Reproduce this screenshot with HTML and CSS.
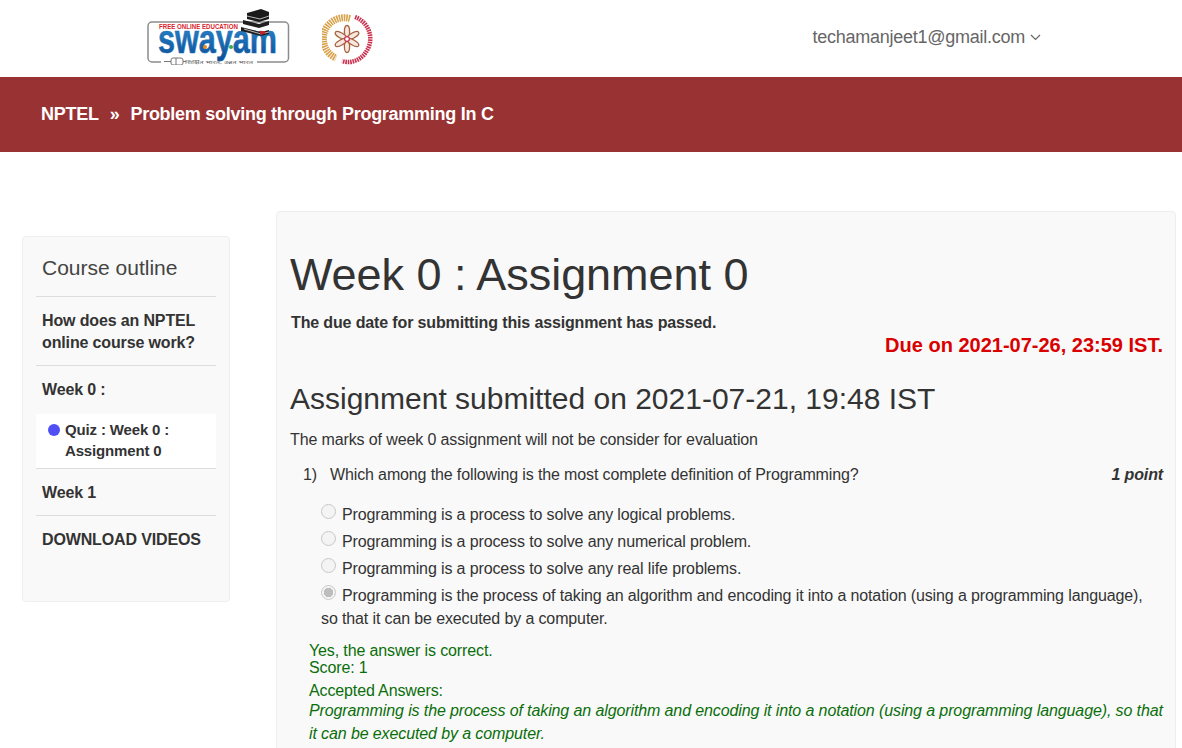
FILE: index.html
```html
<!DOCTYPE html>
<html lang="en">
<head>
<meta charset="utf-8">
<title>Week 0 : Assignment 0</title>
<link rel="stylesheet" href="styles.css">
</head>
<body>
<header class="topbar">
  <div class="logos">
    <svg class="logo-swayam" width="170" height="58" viewBox="0 0 170 58">
      <defs>
        <linearGradient id="swayamBlue" x1="0" y1="0" x2="0" y2="1">
          <stop offset="0" stop-color="#2f8fd6"/>
          <stop offset="1" stop-color="#0c4f96"/>
        </linearGradient>
      </defs>
      <rect x="1" y="15" width="140.5" height="40" rx="4" fill="#fff" stroke="#8c8c8c" stroke-width="1.5"/>
      <rect x="14" y="50" width="96" height="8" fill="#fff"/>
      <text x="12" y="21.5" class="logo-free" textLength="79" lengthAdjust="spacingAndGlyphs">FREE ONLINE EDUCATION</text>
      <text x="11" y="45.5" class="logo-word" textLength="119" lengthAdjust="spacingAndGlyphs" fill="url(#swayamBlue)">swayam</text>
      <circle cx="58" cy="40" r="2" fill="#f08a1c"/>
      <circle cx="84" cy="40" r="2" fill="#35a84a"/>
      <rect x="24" y="51" width="12" height="7" rx="2" fill="#fff" stroke="#777" stroke-width="1"/>
      <path d="M17 54.5h7M36 54.5h3M29 51v7" stroke="#777" stroke-width="1" fill="none"/>
      <text x="38" y="57" class="logo-tag" textLength="68" lengthAdjust="spacingAndGlyphs">शिक्षित भारत, उन्नत भारत</text>
      <path d="M100 6l14-4 8 3v7l-10 3-12-3z" fill="#1a1a1a"/>
      <path d="M96 13l16 4 10-3v4l-10 3-16-4zM94 20l20 5 8-2v4l-8 2-20-5z" fill="#1f1f1f"/>
      <path d="M100 9l13 3 9-3M97 22l17 5 8-2" stroke="#ddd" stroke-width=".8" fill="none"/>
      <rect x="113" y="24" width="5" height="3" fill="#c8202c"/>
    </svg>
    <svg class="logo-seal" width="52" height="52" viewBox="0 0 52 52">
      <path d="M28 4.5A21 21 0 0 0 14 44" fill="none" stroke="#d7a24a" stroke-width="7" stroke-dasharray="1.6 .8"/>
      <path d="M33 3A23 23 0 0 1 44 38C39 46 29 50 20 47" fill="none" stroke="#c9304f" stroke-width="4.5" stroke-dasharray="1.6 .8"/>
      <circle cx="25" cy="25" r="15.5" fill="#fff"/>
      <g fill="#f6e7df" stroke="#a5623f" stroke-width="1.3">
        <ellipse cx="25" cy="18" rx="2.6" ry="6.5"/>
        <ellipse cx="25" cy="32" rx="2.6" ry="6.5"/>
        <ellipse cx="19" cy="21.5" rx="2.6" ry="6.5" transform="rotate(-60 19 21.5)"/>
        <ellipse cx="31" cy="21.5" rx="2.6" ry="6.5" transform="rotate(60 31 21.5)"/>
        <ellipse cx="19" cy="28.5" rx="2.6" ry="6.5" transform="rotate(60 19 28.5)"/>
        <ellipse cx="31" cy="28.5" rx="2.6" ry="6.5" transform="rotate(-60 31 28.5)"/>
      </g>
      <circle cx="25" cy="25" r="2.4" fill="#fff" stroke="#c9304f" stroke-width="1.2"/>
    </svg>
  </div>
  <div class="account">
    <span>techamanjeet1@gmail.com</span>
    <svg class="chevron" width="11" height="7" viewBox="0 0 11 7"><path d="M1 1l4.5 4.5L10 1" fill="none" stroke="#666" stroke-width="1.2"/></svg>
  </div>
</header>

<div class="banner">
  <span>NPTEL</span><span class="sep">»</span><span>Problem solving through Programming In C</span>
</div>

<div class="page">
  <nav class="outline">
    <div class="outline-title">Course outline</div>
    <div class="outline-item first">How does an NPTEL online course work?</div>
    <div class="outline-item week">Week 0 :</div>
    <div class="outline-sub">
      <span class="dot"></span>
      <span>Quiz : Week 0 : Assignment 0</span>
    </div>
    <div class="outline-item single">Week 1</div>
    <div class="outline-item single">DOWNLOAD VIDEOS</div>
  </nav>

  <main class="content">
    <h1>Week 0 : Assignment 0</h1>
    <p class="passed">The due date for submitting this assignment has passed.</p>
    <p class="due">Due on 2021-07-26, 23:59 IST.</p>
    <h2>Assignment submitted on 2021-07-21, 19:48 IST</h2>
    <p class="note">The marks of week 0 assignment will not be consider for evaluation</p>
    <div class="question">
      <span class="qnum">1)</span>
      <span class="qtext">Which among the following is the most complete definition of Programming?</span>
      <span class="points">1 point</span>
    </div>
    <div class="options">
      <div class="option"><span class="radio"></span>Programming is a process to solve any logical problems.</div>
      <div class="option"><span class="radio"></span>Programming is a process to solve any numerical problem.</div>
      <div class="option"><span class="radio"></span>Programming is a process to solve any real life problems.</div>
      <div class="option last"><span class="radio checked"></span>Programming is the process of taking an algorithm and encoding it into a notation (using a programming language), so that it can be executed by a computer.</div>
    </div>
    <div class="feedback">
      <div class="fb-yes">Yes, the answer is correct.</div>
      <div class="fb-score">Score: 1</div>
      <div class="fb-label">Accepted Answers:</div>
      <div class="fb-answer">Programming is the process of taking an algorithm and encoding it into a notation (using a programming language), so that it can be executed by a computer.</div>
    </div>
  </main>
</div>
</body>
</html>
```
FILE: styles.css
```css
* { box-sizing: border-box; }
html, body { height: 748px; overflow: hidden; }
body {
  margin: 0;
  background: #fff;
  color: #333;
  font-family: "Liberation Sans", Arial, sans-serif;
  font-size: 16px;
}
.topbar {
  height: 77px;
  display: flex;
  justify-content: space-between;
  padding: 7px 141px 0 147px;
}
.logos { display: flex; align-items: flex-start; gap: 5px; }
.logo-seal { margin-top: 7px; }
.logo-free { font: bold 6.4px "Liberation Sans", sans-serif; fill: #d8262c; }
.logo-word { font: bold 40px "Liberation Sans", sans-serif; stroke: #1a6cb3; stroke-width: .6px; }
.logo-tag { font: 5px "Noto Sans", "Liberation Sans", sans-serif; fill: #666; }
.account {
  display: flex;
  align-items: center;
  gap: 5px;
  height: 60px;
  color: #666;
  font-size: 18px;
  letter-spacing: -.26px;
}
.chevron { margin-top: 1px; }
.banner {
  height: 75px;
  background: #993333;
  color: #fff;
  font-size: 18px;
  font-weight: bold;
  letter-spacing: -.27px;
  padding: 0 41px;
  display: flex;
  align-items: center;
  gap: 11px;
}
.page {
  display: flex;
  align-items: flex-start;
  padding: 59px 6px 0 22px;
  gap: 46px;
}
.outline {
  flex: 0 0 208px;
  height: 366px;
  margin-top: 25px;
  background: #f9f9f9;
  border: 1px solid #eee;
  border-radius: 4px;
  padding: 0 13px;
}
.outline-title {
  font-size: 21px;
  color: #444;
  padding: 19px 6px 17px;
  line-height: 23px;
  border-bottom: 1px solid #ddd;
}
.outline-item {
  font-size: 16px;
  font-weight: bold;
  line-height: 22px;
  letter-spacing: -.14px;
  padding: 13px 6px 13px;
  border-bottom: 1px solid #ddd;
  color: #333;
}
.outline-item.first { padding-bottom: 11px; }
.outline-item.week { border-bottom: 0; padding-bottom: 13px; }
.outline-item.single { padding-top: 13px; padding-bottom: 11px; }
.outline-item.single:last-child { border-bottom: 0; }
.outline-sub {
  display: flex;
  gap: 5px;
  background: #fff;
  padding: 5px 12px 7px;
  border-bottom: 1px solid #ddd;
  font-size: 15px;
  font-weight: bold;
  line-height: 21px;
  letter-spacing: -.15px;
}
.dot {
  flex: 0 0 12px;
  height: 12px;
  margin-top: 5px;
  border-radius: 50%;
  background: #4f4ff5;
}
.content {
  flex: 1;
  height: 600px;
  background: #f9f9f9;
  border: 1px solid #eee;
  border-radius: 4px;
  padding: 33px 12px 0 13px;
}
h1 {
  margin: 0;
  font-size: 45px;
  font-weight: 400;
  line-height: 60px;
  letter-spacing: -.05px;
  color: #333;
}
.passed {
  margin: 8px 0 0 1px;
  font-size: 16px;
  font-weight: bold;
  line-height: 20px;
  letter-spacing: -.14px;
}
.due {
  margin: 1px 0 0;
  text-align: right;
  color: #d90000;
  font-size: 20px;
  font-weight: bold;
  line-height: 23px;
}
h2 {
  margin: 23px 0 0;
  font-size: 30px;
  font-weight: 400;
  line-height: 38px;
  color: #333;
}
.note { margin: 12px 0 0; font-size: 16px; line-height: 20px; letter-spacing: -.12px; }
.question {
  display: flex;
  margin: 15px 0 0 13px;
  font-size: 16px;
  line-height: 20px;
  letter-spacing: -.13px;
}
.qnum { flex: 0 0 27px; }
.qtext { flex: 1; }
.points { font-weight: bold; font-style: italic; }
.options {
  margin: 18px 12px 0 31px;
  font-size: 16px;
  line-height: 23px;
  letter-spacing: -.125px;
}
.option { min-height: 23px; margin-bottom: 4px; }
.option.last { margin-bottom: 0; }
.radio {
  display: inline-block;
  width: 15px;
  height: 15px;
  margin-right: 6px;
  vertical-align: 1px;
  border-radius: 50%;
  border: 1px solid #c8c8c8;
  background: #f4f4f4;
}
.radio.checked {
  background: radial-gradient(circle, #bdbdbd 0 4.5px, #f4f4f4 5px);
}
.feedback {
  margin: 12px 0 0 19px;
  color: #0a6e0a;
  font-size: 16px;
  letter-spacing: -.13px;
}
.fb-yes, .fb-score { line-height: 17px; }
.fb-label { margin-top: 6px; line-height: 18px; }
.fb-answer { margin-top: -1px; font-style: italic; line-height: 23px; letter-spacing: -.11px; }
```
